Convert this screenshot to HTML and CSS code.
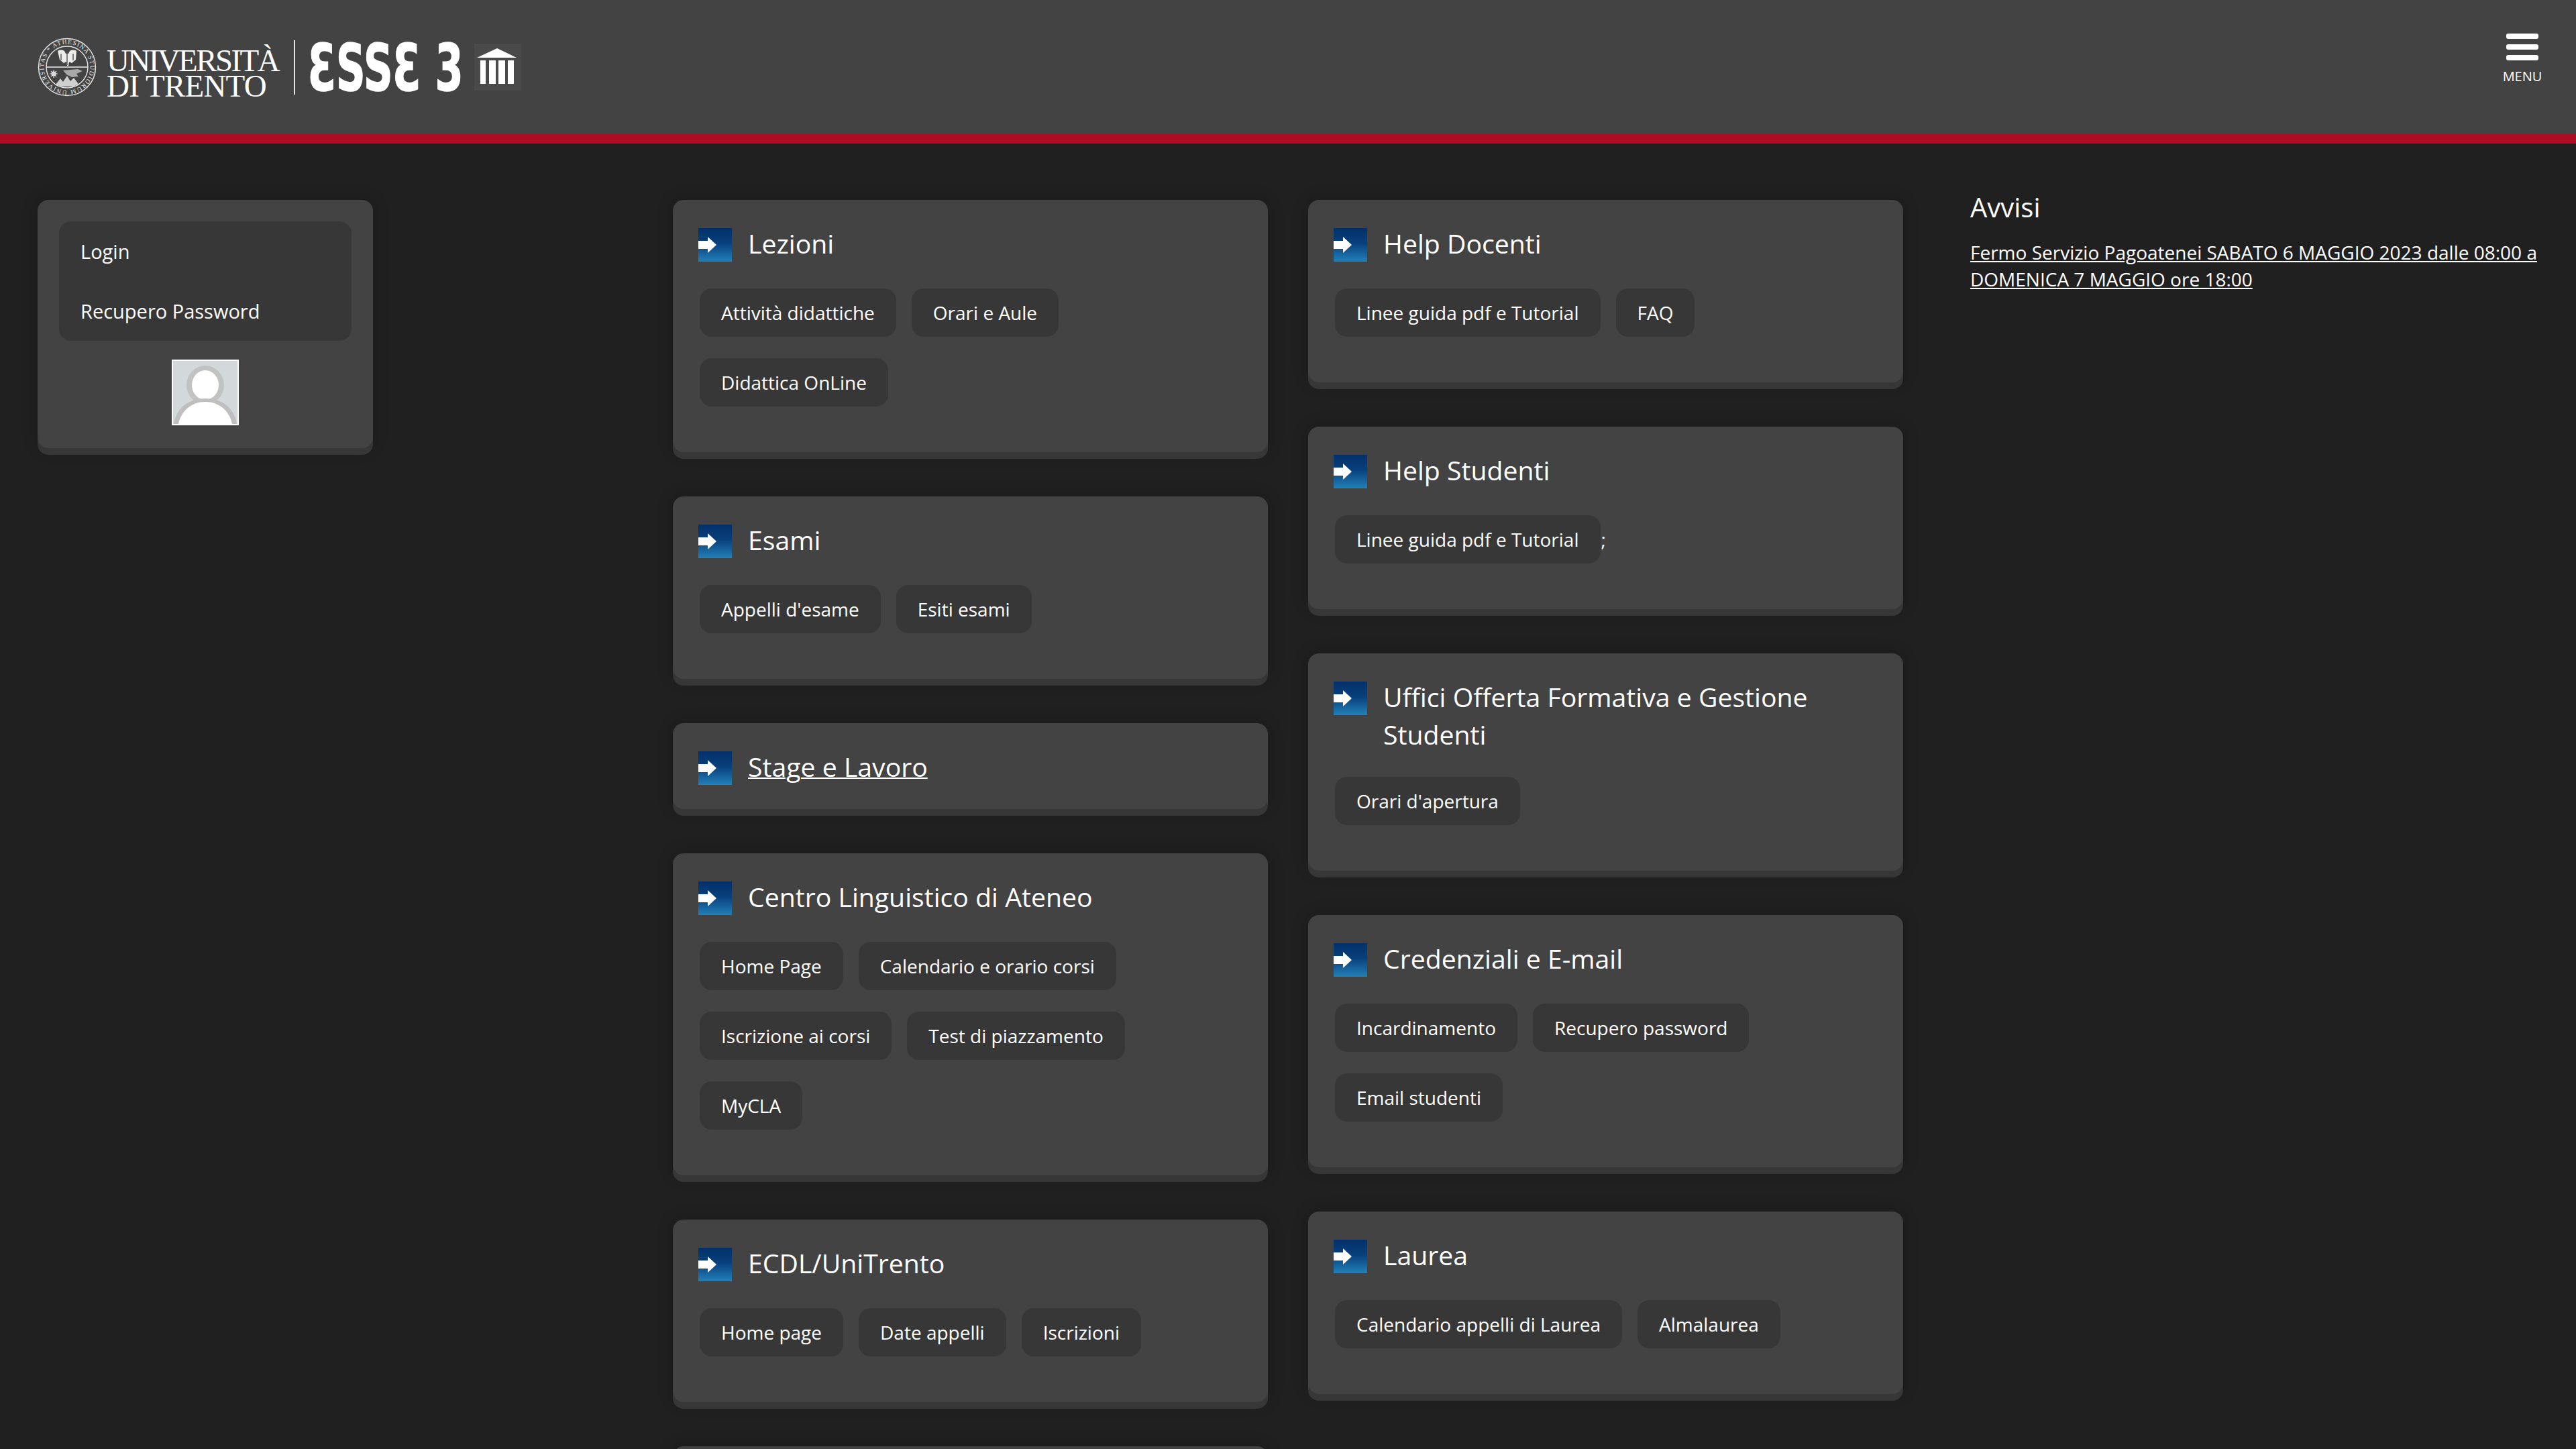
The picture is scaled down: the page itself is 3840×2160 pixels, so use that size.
FILE: index.html
```html
<!DOCTYPE html>
<html lang="it">
<head>
    <meta charset="UTF-8">
    <title>Esse3 - Università di Trento</title>
    <link rel="stylesheet" href="styles.css">
</head>
<body>
    <header class="topbar">
        <a class="brand">
            <svg class="seal" viewBox="0 0 88 88" width="88" height="88">
                <defs>
                    <path id="seal-ring" d="M44 78.500 a34.500 34.500 0 1 1 0 -69 a34.500 34.500 0 1 1 0 69"/>
                </defs>
                <circle cx="44" cy="44" r="42.500" fill="none" stroke="#e2e2e2" stroke-width="1.500"/>
                <circle cx="44" cy="44" r="31" fill="none" stroke="#e2e2e2" stroke-width="1.500"/>
                <text class="seal-text"><textPath href="#seal-ring" textLength="212">UNIVERSITAS * ATHESINA STUDIORUM</textPath></text>
                <path d="M13 44h62" stroke="#f0f0f0" stroke-width="1.500"/>
                <!-- aquila -->
                <path d="M30 20c3-2 7-2 10 0l2 4h4l2-4c3-2 7-2 10 0l-1 13-6 5-4-2-1 6h-2l-1-6-4 2-6-5z" fill="#ececec"/>
                <path d="M44 22v19M35 24v10M53 24v10" stroke="#5a5a5a" stroke-width="1.500"/>
                <!-- sole e monti -->
                <circle cx="24" cy="54" r="3.500" fill="#e8e8e8"/>
                <path d="M24 48v12M18 54h12M20 50l8 8M28 50l-8 8" stroke="#d8d8d8" stroke-width="1.200"/>
                <path d="M38 49l22-2 7 3-9 4 3 4-10 1-8-4z" fill="#a8a8a8"/>
                <path d="M27 70l7-9 4 5 6-9 5 8 5-5 7 9-7 4H35z" fill="#cfcfcf"/>
            </svg>
            <span class="brand-name"><span class="brand-top">UNIVERSITÀ</span><br><span class="brand-bottom">DI TRENTO</span></span>
            <span class="brand-sep"></span>
            <span class="brand-esse"><span class="brand-esse-in">ƐSSƐ 3</span></span>
            <span class="temple">
                <svg viewBox="0 0 70 70" width="70" height="70">
                    <path d="M34 7L4 21h59z" fill="#fff"/>
                    <path d="M9 25h8v35H9zM22 25h10v35H22zM36 25h10v35H36zM50 25h9v35h-9z" fill="#fff"/>
                </svg>
            </span>
        </a>
        <div class="menu-btn">
            <span class="menu-bar"></span>
            <span class="menu-bar"></span>
            <span class="menu-bar"></span>
            <span class="menu-label">MENU</span>
        </div>
    </header>

    <main class="page">
        <aside class="side">
            <div class="card login-card">
                <ul class="login-list">
                    <li>Login</li>
                    <li>Recupero Password</li>
                </ul>
                <svg class="avatar" viewBox="0 0 100 98" width="100" height="98">
                    <rect width="100" height="98" fill="#fff"/>
                    <rect x="2" y="2" width="96" height="94" fill="#d3d8da"/>
                    <ellipse cx="50" cy="38" rx="28" ry="29" fill="#c2c2c2"/>
                    <ellipse cx="50" cy="38" rx="20" ry="22" fill="#fff"/>
                    <path d="M3 96c4-24 22-38 47-38s43 14 47 38z" fill="#bfbfbf"/>
                    <path d="M10 96c4-20 20-33 40-33s36 13 40 33z" fill="#fff"/>
                </svg>
            </div>
        </aside>

        <section class="col">
            <div class="card">
                <h2 class="card-title has-links"><span class="go-icon"></span><span>Lezioni</span></h2>
                <div class="links">
                    <a class="pill">Attività didattiche</a><a class="pill">Orari e Aule</a><a class="pill">Didattica OnLine</a>
                </div>
            </div>
            <div class="card">
                <h2 class="card-title has-links"><span class="go-icon"></span><span>Esami</span></h2>
                <div class="links">
                    <a class="pill">Appelli d'esame</a><a class="pill">Esiti esami</a>
                </div>
            </div>
            <div class="card">
                <h2 class="card-title"><span class="go-icon"></span><a class="title-link">Stage e Lavoro</a></h2>
            </div>
            <div class="card">
                <h2 class="card-title has-links"><span class="go-icon"></span><span>Centro Linguistico di Ateneo</span></h2>
                <div class="links">
                    <a class="pill">Home Page</a><a class="pill">Calendario e orario corsi</a><a class="pill">Iscrizione ai corsi</a><a class="pill">Test di piazzamento</a><a class="pill">MyCLA</a>
                </div>
            </div>
            <div class="card">
                <h2 class="card-title has-links"><span class="go-icon"></span><span>ECDL/UniTrento</span></h2>
                <div class="links">
                    <a class="pill">Home page</a><a class="pill">Date appelli</a><a class="pill">Iscrizioni</a>
                </div>
            </div>
            <div class="card card-cut"></div>
        </section>

        <section class="col">
            <div class="card">
                <h2 class="card-title has-links"><span class="go-icon"></span><span>Help Docenti</span></h2>
                <div class="links">
                    <a class="pill">Linee guida pdf e Tutorial</a><a class="pill">FAQ</a>
                </div>
            </div>
            <div class="card">
                <h2 class="card-title has-links"><span class="go-icon"></span><span>Help Studenti</span></h2>
                <div class="links">
                    <a class="pill pill-semi">Linee guida pdf e Tutorial</a><span class="semi">;</span>
                </div>
            </div>
            <div class="card">
                <h2 class="card-title has-links two-lines"><span class="go-icon"></span><span>Uffici Offerta Formativa e Gestione Studenti</span></h2>
                <div class="links">
                    <a class="pill">Orari d'apertura</a>
                </div>
            </div>
            <div class="card">
                <h2 class="card-title has-links"><span class="go-icon"></span><span>Credenziali e E-mail</span></h2>
                <div class="links">
                    <a class="pill">Incardinamento</a><a class="pill">Recupero password</a><a class="pill">Email studenti</a>
                </div>
            </div>
            <div class="card">
                <h2 class="card-title has-links"><span class="go-icon"></span><span>Laurea</span></h2>
                <div class="links">
                    <a class="pill">Calendario appelli di Laurea</a><a class="pill">Almalaurea</a>
                </div>
            </div>
        </section>

        <aside class="notices">
            <h2 class="notices-title">Avvisi</h2>
            <a class="notice-link">Fermo Servizio Pagoatenei SABATO 6 MAGGIO 2023 dalle 08:00 a DOMENICA 7 MAGGIO ore 18:00</a>
        </aside>
    </main>
</body>
</html>
```

FILE: styles.css
```css
html, body {
    margin: 0;
    height: 2160px;
    overflow: hidden;
}
body {
    background-color: #202020;
    color: #fff;
    font-family: "Open Sans", "Noto Sans", sans-serif;
    font-size: 28px;
}
.topbar {
    height: 200px;
    background-color: #434343;
    border-bottom: 14px solid #ae0c23;
    display: flex;
    justify-content: space-between;
    padding: 0 51px 0 56px;
}
.brand {
    display: flex;
    align-items: center;
}
.seal {
    display: block;
}
.seal-text {
    font-family: "Liberation Serif", serif;
    font-size: 9.500px;
    fill: #e6e6e6;
}
.brand-name {
    font-family: "Liberation Serif", serif;
    font-size: 47px;
    line-height: 38px;
    margin-left: 15px;
    padding-top: 18px;
    width: 279px;
}
.brand-top {
    letter-spacing: -2.600px;
}
.brand-bottom {
    letter-spacing: -0.800px;
}
.brand-sep {
    width: 2px;
    height: 81px;
    background-color: #e6e6e6;
}
.brand-esse {
    display: block;
    width: 229px;
    height: 70px;
    margin-left: 19px;
}
.brand-esse-in {
    display: block;
    font-family: "DejaVu Sans", sans-serif;
    font-weight: bold;
    font-size: 96px;
    line-height: 70px;
    white-space: nowrap;
    -webkit-text-stroke: 1.500px #fff;
    padding-top: 2px;
    transform-origin: 0 0;
    transform: scaleX(0.63);
}
.temple {
    display: block;
    width: 70px;
    height: 70px;
    margin-left: 19px;
    background-color: #4a4a4a;
}
.temple svg {
    display: block;
}
.menu-btn {
    width: 58px;
    padding-top: 50px;
    display: flex;
    flex-direction: column;
    align-items: center;
}
.menu-bar {
    width: 48px;
    height: 8px;
    border-radius: 3px;
    background-color: #fff;
    margin-bottom: 8px;
}
.menu-label {
    font-size: 20px;
    line-height: 28px;
    margin-top: 2px;
}
.page {
    display: grid;
    grid-template-columns: 887px 887px 887px 1fr;
    column-gap: 60px;
    padding: 84px 0 0 56px;
}
.side .card {
    width: 500px;
}
.card {
    background-color: #434343;
    border-radius: 16px;
    box-shadow: 0 10px 0 #373737, 0 0 24px rgba(0,0,0,0.2);
    padding: 36px 38px;
    margin-bottom: 66px;
}
.card-title {
    display: flex;
    align-items: flex-start;
    gap: 24px;
    margin: 0;
    font-size: 39.200px;
    font-weight: 400;
    line-height: 56px;
    padding-top: 1px;
    height: 55px;
}
.card-title.has-links {
    margin-bottom: 40px;
}
.card-title.two-lines {
    height: auto;
    margin-bottom: 35px;
}
.title-link {
    text-decoration: underline;
    text-decoration-thickness: 2px;
}
.go-icon {
    flex: none;
    width: 50px;
    height: 50px;
    margin-top: 5px;
    background-image: linear-gradient(180deg, #03306a 0%, #07407c 45%, #2380b8 100%);
    position: relative;
}
.go-icon::before {
    content: "";
    position: absolute;
    left: 0;
    top: 19px;
    width: 15px;
    height: 12px;
    background-color: #fff;
    filter: blur(0.5px);
}
.go-icon::after {
    content: "";
    position: absolute;
    left: 14px;
    top: 13px;
    border-left: 13px solid #fff;
    border-top: 12px solid transparent;
    border-bottom: 12px solid transparent;
    filter: blur(0.5px);
}
.links {
    display: flex;
    flex-wrap: wrap;
    align-items: flex-start;
    padding-left: 2px;
    column-gap: 23px;
}
.pill {
    background-color: #373737;
    border-radius: 18px;
    padding: 0 32px;
    height: 72px;
    line-height: 72px;
    margin-bottom: 32px;
}
.pill-semi {
    margin-right: -23px;
}
.semi {
    line-height: 72px;
    margin-left: 1px;
}
.card-cut {
    height: 40px;
}
.login-card {
    padding: 32px;
    height: 370px;
    box-sizing: border-box;
    display: flex;
    flex-direction: column;
    align-items: center;
}
.login-list {
    list-style: none;
    margin: 0;
    padding: 0 32px;
    width: 100%;
    box-sizing: border-box;
    background-color: #373737;
    border-radius: 18px;
    font-size: 29px;
}
.login-list li {
    line-height: 89px;
}
.avatar {
    display: block;
    margin-top: 28px;
}
.notices {
    margin: -14px 0 0 40px;
}
.notices-title {
    margin: 0 0 22px;
    font-size: 40px;
    font-weight: 400;
    line-height: 50px;
}
.notice-link {
    display: block;
    line-height: 40px;
    text-decoration: underline;
    margin-right: 50px;
}
```
